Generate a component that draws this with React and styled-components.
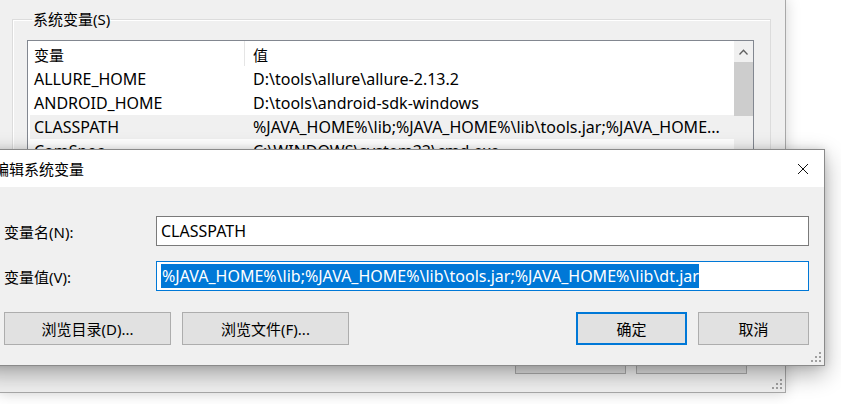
import styled, { createGlobalStyle } from "styled-components"

const GlobalStyle = createGlobalStyle`
    html, body {
        margin: 0;
        padding: 0;
        background: #ffffff;
    }
    body {
        font-family: "Noto Sans", "Noto Sans CJK SC", sans-serif;
        font-size: 15px;
        color: #000;
    }
`

const rows = [
    { name: "ALLURE_HOME", value: "D:\\tools\\allure\\allure-2.13.2" },
    { name: "ANDROID_HOME", value: "D:\\tools\\android-sdk-windows" },
    { name: "CLASSPATH", value: "%JAVA_HOME%\\lib;%JAVA_HOME%\\lib\\tools.jar;%JAVA_HOME...", selected: true },
    { name: "ComSpec", value: "C:\\WINDOWS\\system32\\cmd.exe" },
    { name: "DriverData", value: "C:\\Windows\\System32\\Drivers\\DriverData" },
    { name: "JAVA_HOME", value: "C:\\Program Files\\Java\\jdk1.8.0_221" },
]

function Grip(){
    return (
        <GripBox>
            <svg width="10" height="10" viewBox="0 0 10 10">
                {[[8,0],[8,4],[4,4],[8,8],[4,8],[0,8]].map(([x, y]) => (
                    <rect key={`${x}-${y}`} x={x} y={y} width="2" height="2" fill="#a0a0a0" />
                ))}
            </svg>
        </GripBox>
    )
}

export default function App(){
    return (
        <>
        <GlobalStyle/>
        <Desktop>
            <BackWindow>
                <GroupBox>
                    <legend>系统变量(S)</legend>
                    <ListBox>
                        <ListContent>
                            <HeaderRow>
                                <NameCell>变量</NameCell>
                                <HeaderDivider/>
                                <ValueCell>值</ValueCell>
                            </HeaderRow>
                            {rows.map(row => (
                                <Row key={row.name} $selected={row.selected}>
                                    <NameCell>{row.name}</NameCell>
                                    <ValueCell>{row.value}</ValueCell>
                                </Row>
                            ))}
                        </ListContent>
                        <ScrollBar>
                            <ScrollArrow>
                                <svg width="9" height="6" viewBox="0 0 9 6">
                                    <path d="M0.5 5.5 L4.5 1.2 L8.5 5.5" fill="none" stroke="#606060" strokeWidth="1.3" />
                                </svg>
                            </ScrollArrow>
                            <ScrollThumb/>
                        </ScrollBar>
                    </ListBox>
                </GroupBox>
                <BackButtons>
                    <BackButton>确定</BackButton>
                    <BackButton>取消</BackButton>
                </BackButtons>
                <Grip/>
            </BackWindow>

            <Dialog>
                <TitleBar>
                    <span>编辑系统变量</span>
                    <CloseButton>
                        <svg width="12" height="12" viewBox="0 0 12 12">
                            <path d="M1 1 L11 11 M11 1 L1 11" stroke="#111" strokeWidth="1" />
                        </svg>
                    </CloseButton>
                </TitleBar>
                <DialogBody>
                    <FieldRow>
                        <FieldLabel>变量名(N):</FieldLabel>
                        <TextBox>CLASSPATH</TextBox>
                    </FieldRow>
                    <FieldRow>
                        <FieldLabel>变量值(V):</FieldLabel>
                        <TextBox $focused>
                            <Selection>%JAVA_HOME%\lib;%JAVA_HOME%\lib\tools.jar;%JAVA_HOME%\lib\dt.jar</Selection>
                        </TextBox>
                    </FieldRow>
                    <ButtonRow>
                        <Button $wide>浏览目录(D)...</Button>
                        <Button $wide>浏览文件(F)...</Button>
                        <Spacer/>
                        <Button $default>确定</Button>
                        <Button>取消</Button>
                    </ButtonRow>
                </DialogBody>
                <Grip/>
            </Dialog>
        </Desktop>
        </>
    )
}

const Desktop = styled.div`
    position: relative;
    width: 841px;
    height: 404px;
    overflow: hidden;
    background: #ffffff;
`

const BackWindow = styled.div`
    position: absolute;
    left: -1px;
    top: -1px;
    width: 787px;
    height: 394px;
    box-sizing: border-box;
    background: #f0f0f0;
    border: 1px solid #a8a8a8;
    box-shadow: 0 0 14px rgba(0, 0, 0, 0.18);
    display: flex;
    flex-direction: column;
    padding: 10px 14px 0 12px;
`

const GroupBox = styled.fieldset`
    margin: 0;
    padding: 12px 16px 0 14px;
    height: 300px;
    box-sizing: border-box;
    border: 1px solid #dcdcdc;
    box-shadow: inset 1px 1px 0 #ffffff;

    legend{
        margin-left: 5px;
        padding: 0 1px;
        font-size: 15px;
        line-height: 18px;
    }
`

const ListBox = styled.div`
    height: 200px;
    background: #ffffff;
    border: 1px solid #828790;
    display: flex;
    overflow: hidden;
`

const ListContent = styled.div`
    flex: 1;
    min-width: 0;
    padding-left: 2px;
`

const HeaderRow = styled.div`
    height: 26px;
    display: flex;
    align-items: center;
    font-size: 15px;
`

const HeaderDivider = styled.div`
    width: 1px;
    height: 25px;
    margin-top: -1px;
    background: #e5e5e5;
`

const Row = styled.div`
    height: 24px;
    display: flex;
    align-items: center;
    font-size: 16px;
    background: ${p => p.$selected ? "#f0f0f0" : "transparent"};

    & > div:last-child{
        padding-left: 9px;
    }
`

const NameCell = styled.div`
    width: 210px;
    padding-left: 4px;
    white-space: nowrap;
    overflow: hidden;
`

const ValueCell = styled.div`
    flex: 1;
    padding-left: 8px;
    white-space: nowrap;
    overflow: hidden;
`

const ScrollBar = styled.div`
    width: 19px;
    background: #f0f0f0;
    display: flex;
    flex-direction: column;
`

const ScrollArrow = styled.div`
    height: 21px;
    display: flex;
    align-items: center;
    justify-content: center;
`

const ScrollThumb = styled.div`
    height: 54px;
    background: #cdcdcd;
`

const BackButtons = styled.div`
    display: flex;
    justify-content: flex-end;
    gap: 10px;
    margin-top: auto;
    margin-bottom: 18px;
    padding-right: 24px;
`

const BackButton = styled.div`
    width: 111px;
    height: 33px;
    box-sizing: border-box;
    background: #e1e1e1;
    border: 1px solid #adadad;
`

const GripBox = styled.div`
    position: absolute;
    right: 3px;
    bottom: 3px;
    line-height: 0;
`

const Dialog = styled.div`
    position: absolute;
    left: -20px;
    top: 149px;
    width: 845px;
    height: 217px;
    box-sizing: border-box;
    background: #f0f0f0;
    border: 1px solid #8a8a8a;
    box-shadow: 0 8px 22px rgba(0, 0, 0, 0.32), 0 0 8px rgba(0, 0, 0, 0.12);
    display: flex;
    flex-direction: column;
`

const TitleBar = styled.div`
    height: 37px;
    background: #ffffff;
    display: flex;
    align-items: center;
    justify-content: space-between;
    padding-left: 13px;
    font-size: 15px;
`

const CloseButton = styled.div`
    width: 46px;
    height: 37px;
    display: flex;
    align-items: center;
    justify-content: center;
    margin-right: -2px;
`

const DialogBody = styled.div`
    padding: 29px 15px 0 23px;
    display: flex;
    flex-direction: column;
`

const FieldRow = styled.div`
    display: flex;
    align-items: center;
    margin-bottom: 15px;
`

const FieldLabel = styled.div`
    width: 152px;
    font-size: 15px;
`

const TextBox = styled.div`
    flex: 1;
    height: 30px;
    box-sizing: border-box;
    background: #ffffff;
    border: 1px solid ${p => p.$focused ? "#0078d7" : "#7a7a7a"};
    display: flex;
    align-items: center;
    padding-left: 4px;
    font-size: 16px;
    white-space: nowrap;
    overflow: hidden;
`

const Selection = styled.span`
    background: #0078d7;
    color: #ffffff;
    line-height: 24px;
    padding-left: 1px;
`

const ButtonRow = styled.div`
    display: flex;
    gap: 11px;
    margin-top: 6px;
`

const Spacer = styled.div`
    flex: 1;
`

const Button = styled.div`
    width: ${p => p.$wide ? "167px" : "111px"};
    height: 33px;
    box-sizing: border-box;
    background: #e1e1e1;
    border: ${p => p.$default ? "2px solid #0078d7" : "1px solid #adadad"};
    display: flex;
    align-items: center;
    justify-content: center;
    font-size: 15px;
`
